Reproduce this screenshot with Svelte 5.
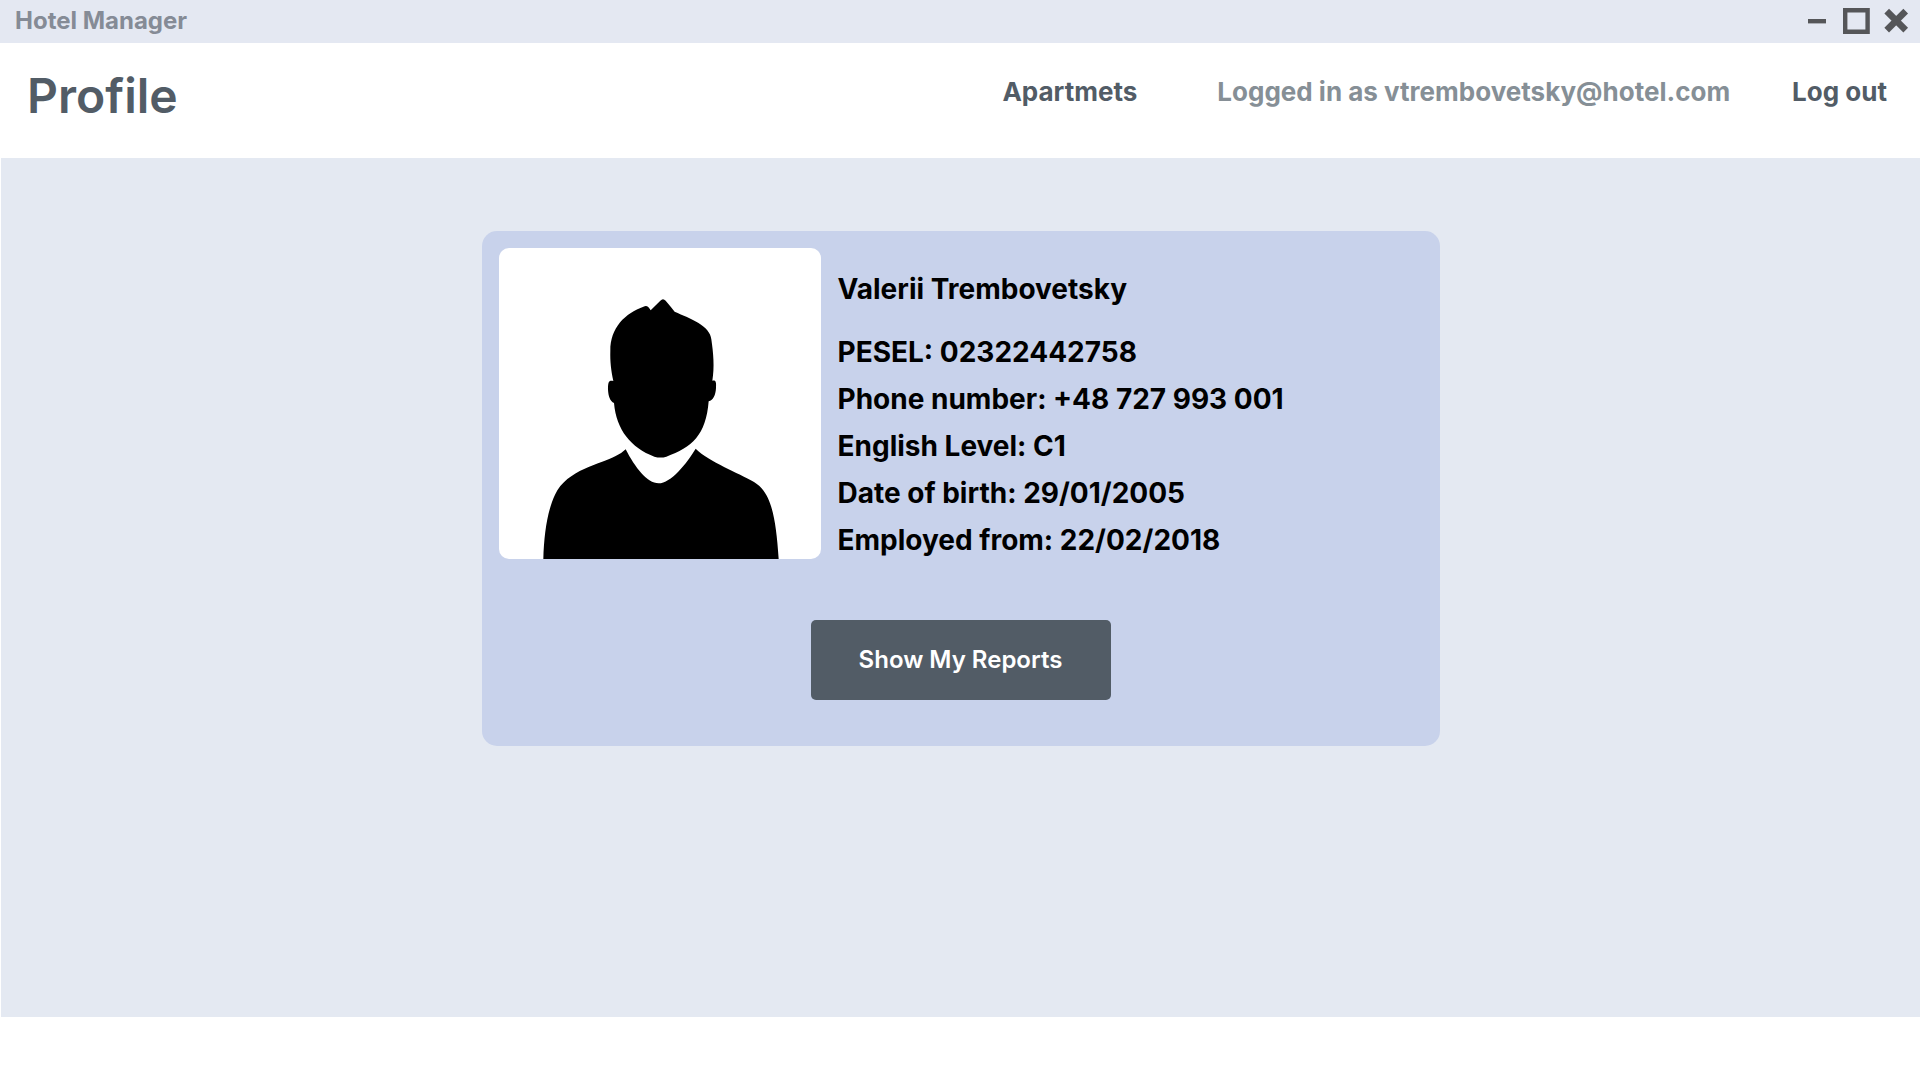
<script lang="ts">
  const details = [
    { label: 'PESEL', value: '02322442758' },
    { label: 'Phone number', value: '+48 727 993 001' },
    { label: 'English Level', value: 'C1' },
    { label: 'Date of birth', value: '29/01/2005' },
    { label: 'Employed from', value: '22/02/2018' },
  ];
</script>

<div class="window">
  <div class="titlebar">
    <span class="app-name">Hotel Manager</span>
    <div class="controls">
      <button type="button" aria-label="Minimize">
        <svg width="28" height="28" viewBox="0 0 28 28"><path d="M6 14.2H24" stroke-width="4.4" /></svg>
      </button>
      <button type="button" aria-label="Maximize">
        <svg width="28" height="28" viewBox="0 0 28 28"><path d="M3.2 3.2H25.6V24.8H3.2Z" stroke-width="4.4" /></svg>
      </button>
      <button type="button" aria-label="Close">
        <svg width="28" height="28" viewBox="0 0 28 28"><path d="M4.7 4.2L23.7 23.2M23.7 4.2L4.7 23.2" stroke-width="6.6" /></svg>
      </button>
    </div>
  </div>

  <header>
    <h1>Profile</h1>
    <nav>
      <a class="apartments" href="#apartments">Apartmets</a>
      <span class="account">Logged in as vtrembovetsky@hotel.com</span>
      <a href="#logout">Log out</a>
    </nav>
  </header>

  <main>
    <section class="card">
      <div class="person">
        <div class="photo">
          <svg viewBox="0 0 966 933" role="img" aria-label="Employee photo">
            <path d="M343 399C336 365 333 342 334 308C334 240 377 196 437 175Q446 171 455 187L484 158Q492 149 500 158Q517 178 527 191C575 212 633 233 637 274C643 315 647 358 640 398C651 395 652 403 651 420C650 440 643 457 629 460C621 561 579 599 502 626Q485 631 466 626C396 599 352 546 345 465C333 459 328 444 327 425C327 402 329 396 343 399Z" />
            <path d="M133 933C135 858 145 789 168 740C204 664 305 649 350 624Q366 618 380 604C408 658 444 706 479 706C515 706 563 647 590 602C631 642 718 674 765 702C813 731 830 794 839 933Z" />
          </svg>
        </div>
        <div class="info">
          <h2>Valerii Trembovetsky</h2>
          <ul>
            {#each details as item}
              <li>{item.label}: {item.value}</li>
            {/each}
          </ul>
        </div>
      </div>
      <button class="reports" type="button">Show My Reports</button>
    </section>
  </main>
</div>

<style>
  :global(body) {
    margin: 0;
    background: #fff;
  }

  .window {
    font-family: Inter, "Liberation Sans", sans-serif;
    color: #000;
  }

  .titlebar {
    display: flex;
    align-items: center;
    justify-content: space-between;
    box-sizing: border-box;
    height: 43px;
    padding: 0 10px 2px 15px;
    background: #e4e8f2;
  }

  .app-name {
    color: #858b96;
    font-size: 24px;
    font-weight: 700;
    line-height: 30px;
  }

  .controls {
    display: flex;
    gap: 12px;
  }

  .controls button {
    display: flex;
    padding: 0;
    border: 0;
    background: none;
  }

  .controls svg {
    fill: none;
    stroke: #555659;
  }

  header {
    display: flex;
    align-items: flex-start;
    justify-content: space-between;
    box-sizing: border-box;
    height: 115px;
    padding: 24px 33px 0 27px;
    background: #fff;
  }

  h1 {
    margin: 0;
    color: #525c66;
    font-size: 48px;
    font-weight: 600;
    line-height: 58px;
  }

  nav {
    display: flex;
    gap: 62px;
    padding-top: 9px;
    font-size: 26px;
    font-weight: 700;
    line-height: 32px;
  }

  nav a {
    color: #525c66;
    text-decoration: none;
  }

  .apartments {
    margin-right: 18px;
  }

  .account {
    color: #868f96;
  }

  main {
    box-sizing: border-box;
    min-height: 859px;
    margin-left: 1px;
    padding: 73px 16px;
    background: #e4e9f2;
  }

  .card {
    display: flex;
    flex-direction: column;
    align-items: center;
    gap: 56px;
    box-sizing: border-box;
    max-width: 958px;
    margin: 0 auto;
    padding: 17px 17px 46px;
    border-radius: 15px;
    background: #c8d2eb;
  }

  .person {
    display: flex;
    align-items: flex-start;
    gap: 17px;
    width: 100%;
  }

  .photo {
    flex: none;
    width: 322px;
    overflow: hidden;
    border-radius: 10px;
    background: #fff;
  }

  .photo svg {
    display: block;
    width: 100%;
  }

  .info {
    padding-top: 18px;
    font-size: 28px;
    font-weight: 700;
    line-height: 47px;
  }

  h2 {
    margin: 0 0 16px;
    font: inherit;
  }

  ul {
    margin: 0;
    padding: 0;
    list-style: none;
  }

  .reports {
    width: 300px;
    height: 80px;
    border: 0;
    border-radius: 5px;
    background: #525c66;
    color: #fff;
    font-family: inherit;
    font-size: 24px;
    font-weight: 600;
    line-height: 30px;
  }
</style>
